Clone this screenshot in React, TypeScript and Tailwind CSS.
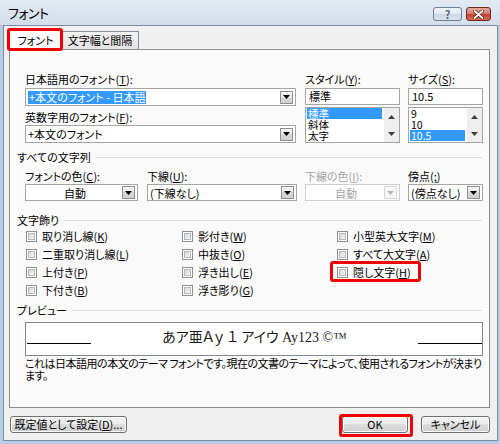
import React from "react";

const ui = "font-['Noto_Sans_CJK_JP','Noto_Sans',sans-serif] [font-feature-settings:'palt']";

function Key({ k }: { k: string }) {
  return <span className="underline decoration-1 underline-offset-[1px]">{k}</span>;
}

function Tri({ up, color = "#000" }: { up?: boolean; color?: string }) {
  return (
    <svg width="7" height="4" viewBox="0 0 7 4">
      <path d={up ? "M0 4h7L3.5 0z" : "M0 0h7L3.5 4z"} fill={color} />
    </svg>
  );
}

function DropBtn({ disabled }: { disabled?: boolean }) {
  return (
    <div
      className={`flex h-[13px] w-[13px] shrink-0 items-center justify-center border ${
        disabled
          ? "border-[#d9d9d9] bg-[#f7f7f7]"
          : "border-[#8e8f8f] bg-[linear-gradient(#f6f6f6,#e6e6e6_50%,#d9d9d9_50%,#cfcfcf)]"
      }`}
    >
      <Tri color={disabled ? "#b5b5b5" : "#000"} />
    </div>
  );
}

function Combo({
  className,
  children,
  disabled,
  center,
}: {
  className: string;
  children: React.ReactNode;
  disabled?: boolean;
  center?: boolean;
}) {
  return (
    <div
      className={`flex items-center border bg-white pr-[2px] ${
        disabled ? "border-[#cdcdcd] text-[#a4a4a4]" : "border-[#a5a5a5]"
      } ${className}`}
    >
      <div className={`flex-1 overflow-hidden whitespace-nowrap pl-[2px] leading-[14px] ${center ? "text-center" : ""}`}>
        {children}
      </div>
      <DropBtn disabled={disabled} />
    </div>
  );
}

function ListBox({ items, sel }: { items: string[]; sel: string }) {
  return (
    <div className="mt-[2px] flex h-[36px] overflow-hidden border border-[#a5a5a5] bg-white">
      <div className="flex-1 pl-[1px] pr-[2px] text-[10.5px]">
        {items.map((i) => (
          <div
            key={i}
            className={`h-[11px] pl-[1px] leading-[11px] ${i === sel ? "bg-[#3399ff] text-white" : ""}`}
          >
            {i}
          </div>
        ))}
      </div>
      <div className="flex w-[15px] flex-col bg-[#eeeeee]">
        <div className="flex flex-1 items-center justify-center">
          <Tri up color="#404040" />
        </div>
        <div className="flex flex-1 items-center justify-center">
          <Tri color="#404040" />
        </div>
      </div>
    </div>
  );
}

function Label({ children, disabled }: { children: React.ReactNode; disabled?: boolean }) {
  return (
    <div className={`h-[13px] whitespace-nowrap leading-[13px] ${disabled ? "text-[#a4a4a4]" : ""}`}>
      {children}
    </div>
  );
}

function Sep({ children, className }: { children: React.ReactNode; className: string }) {
  return (
    <div className={`flex h-[12px] items-center gap-[5px] ${className}`}>
      <span className="leading-[12px]">{children}</span>
      <div className="mr-[1px] h-px flex-1 bg-[#d5dfe5]" />
    </div>
  );
}

function Check({ children, mark }: { children?: React.ReactNode; mark?: boolean }) {
  if (!children) return <div className="h-[18px]" />;
  return (
    <div className="relative flex h-[18px] items-center gap-[5px] whitespace-nowrap">
      <div className="h-[11px] w-[11px] border border-[#8f8f8f] bg-white p-px">
        <div className="h-full w-full border border-[#b5b8bd] bg-[linear-gradient(135deg,#d6d8dc,#f7f7f7)]" />
      </div>
      <span className="leading-[13px]">{children}</span>
      {mark && (
        <div className="absolute left-[-7px] top-[-2px] h-[21px] w-[91px] rounded-[3px] border-[3px] border-[#f00000]" />
      )}
    </div>
  );
}

function Btn({ children, className }: { children: React.ReactNode; className: string }) {
  return (
    <div
      className={`relative flex h-[17px] items-center justify-center rounded-[3px] border border-[#707070] bg-[linear-gradient(#f2f2f2,#ebebeb_50%,#dddddd_50%,#cfcfcf)] leading-none shadow-[inset_0_0_0_1px_#fbfbfb] ${className}`}
    >
      {children}
    </div>
  );
}

export default function App() {
  return (
    <div className={`flex h-[444px] w-[500px] flex-col overflow-hidden bg-[#b6cde4] text-[11px] text-black ${ui}`}>
      {/* title bar */}
      <div className="flex h-[25px] shrink-0 items-start bg-linear-to-b from-[#e3eaf2] to-[#d3deea]">
        <div className="ml-[8px] mt-[4px] text-[13px] leading-[17px] tracking-[-0.5px]">フォント</div>
        <div className="ml-auto mr-[9px] mt-[7px] flex gap-[4px]">
          <div className="flex h-[14px] w-[29px] items-center justify-center rounded-[3px] border border-[#707f93] bg-[linear-gradient(#f3f6f9,#e1e8f0_50%,#cbd6e3_50%,#d9e2ec)] text-[11px] font-bold leading-none text-[#56657a]">
            ?
          </div>
          <div className="flex h-[14px] w-[25px] items-center justify-center rounded-[3px] border border-[#6d2a24] bg-[linear-gradient(#e8a89d,#d7776a_50%,#c1402f_50%,#d36a52)]">
            <svg width="11" height="9" viewBox="0 0 11 9">
              <path d="M1.5 1L9.5 8M9.5 1L1.5 8" stroke="#4a1a14" strokeWidth="3.2" strokeLinecap="round" />
              <path d="M1.5 1L9.5 8M9.5 1L1.5 8" stroke="#fff" strokeWidth="1.8" strokeLinecap="round" />
            </svg>
          </div>
        </div>
      </div>

      {/* client area */}
      <div className="mb-[3px] ml-[3px] mr-[2px] flex flex-1 flex-col border border-[#7c8da3] bg-[#f0f0f0]">
        {/* tabs */}
        <div className="ml-[5px] mt-[3px] flex items-end">
          <div className="relative z-10 -mb-px flex h-[21px] w-[53px] items-start justify-center border border-b-0 border-[#898c95] bg-[#fafafa] pt-[4px] leading-[13px]">
            フォント
            <div className="absolute left-[-3px] top-[-2px] h-[23px] w-[56px] rounded-[3px] border-[3px] border-[#f00000]" />
          </div>
          <div className="flex h-[18px] w-[77px] items-start justify-center border border-b-0 border-l-0 border-[#898c95] bg-[linear-gradient(#f2f2f2,#e3e3e3)] pt-[2px] leading-[13px]">
            文字幅と間隔
          </div>
        </div>

        {/* tab page */}
        <div className="ml-[5px] mr-[7px] flex h-[359px] flex-col border border-[#898c95] bg-[#fafafa] pl-[7px] pr-[6px] pt-[23px]">
          {/* fonts */}
          <div className="ml-[8px] flex">
            <div className="w-[271px]">
              <Label>
                日本語用のフォント(<Key k="T" />):
              </Label>
              <Combo className="mt-[2px] h-[18px]">
                <span className="inline-block bg-[#3399ff] px-px leading-[13px] text-white">+本文のフォント - 日本語</span>
              </Combo>
              <div className="mt-[5px]">
                <Label>
                  英数字用のフォント(<Key k="F" />):
                </Label>
              </div>
              <Combo className="mt-px h-[18px]">+本文のフォント</Combo>
            </div>
            <div className="ml-[9px] w-[95px]">
              <Label>
                スタイル(<Key k="Y" />):
              </Label>
              <div className="mt-[2px] h-[17px] border border-[#a5a5a5] bg-white pl-[3px] leading-[15px]">標準</div>
              <ListBox items={["標準", "斜体", "太字"]} sel="標準" />
            </div>
            <div className="ml-[8px] w-[75px]">
              <Label>
                サイズ(<Key k="S" />):
              </Label>
              <div className="mt-[2px] h-[17px] border border-[#a5a5a5] bg-white pl-[3px] leading-[15px]">10.5</div>
              <ListBox items={["9", "10", "10.5"]} sel="10.5" />
            </div>
          </div>

          <Sep className="mt-[8px]">すべての文字列</Sep>

          {/* colours and underline */}
          <div className="ml-[8px] mt-[7px] flex">
            <div className="w-[113px]">
              <Label>
                フォントの色(<Key k="C" />):
              </Label>
              <Combo className="mt-px h-[17px]" center>
                自動
              </Combo>
            </div>
            <div className="ml-[9px] w-[150px]">
              <Label>
                下線(<Key k="U" />):
              </Label>
              <Combo className="mt-px h-[17px]">(下線なし)</Combo>
            </div>
            <div className="ml-[8px] w-[95px]">
              <Label disabled>
                下線の色(<Key k="I" />):
              </Label>
              <Combo className="mt-px h-[17px]" center disabled>
                自動
              </Combo>
            </div>
            <div className="ml-[8px] w-[75px]">
              <Label>
                傍点(<Key k=";" />)
              </Label>
              <Combo className="mt-px h-[17px]">(傍点なし)</Combo>
            </div>
          </div>

          <Sep className="mt-[13px]">文字飾り</Sep>

          {/* effects */}
          <div className="ml-[9px] mt-px grid grid-cols-[156px_155px_1fr]">
            <div>
              <Check>
                取り消し線(<Key k="K" />)
              </Check>
              <Check>
                二重取り消し線(<Key k="L" />)
              </Check>
              <Check>
                上付き(<Key k="P" />)
              </Check>
              <Check>
                下付き(<Key k="B" />)
              </Check>
            </div>
            <div>
              <Check>
                影付き(<Key k="W" />)
              </Check>
              <Check>
                中抜き(<Key k="O" />)
              </Check>
              <Check>
                浮き出し(<Key k="E" />)
              </Check>
              <Check>
                浮き彫り(<Key k="G" />)
              </Check>
            </div>
            <div>
              <Check>
                小型英大文字(<Key k="M" />)
              </Check>
              <Check>
                すべて大文字(<Key k="A" />)
              </Check>
              <Check mark>
                隠し文字(<Key k="H" />)
              </Check>
              <Check />
            </div>
          </div>

          <Sep className="mt-[5px]">プレビュー</Sep>

          {/* preview */}
          <div className="ml-[8px] mt-[6px] flex h-[34px] border border-[#828790] bg-white pl-px">
            <div className="h-[21px] w-[64px] border-b border-black" />
            <div className="flex-1 whitespace-nowrap pt-[6px] text-center font-['Liberation_Serif','Noto_Sans_CJK_JP',serif] text-[14px] leading-[17px] text-[#1a1a1a]">
              あア亜Ａｙ １ アイウ Ay123 ©™
            </div>
            <div className="h-[21px] w-[64px] border-b border-black" />
          </div>
          <div className="ml-[8px] mt-px whitespace-nowrap leading-[12px] tracking-[-0.5px]">
            これは日本語用の本文のテーマ フォントです。現在の文書のテーマによって、使用されるフォントが決まり
            <br />
            ます。
          </div>
        </div>

        {/* buttons */}
        <div className="ml-[6px] mr-[7px] mt-[8px] flex">
          <Btn className="w-[117px]">
            既定値として設定(<Key k="D" />)...
          </Btn>
          <Btn className="ml-auto w-[66px]">
            OK
            <div className="absolute left-[-4px] top-[-3px] h-[23px] w-[74px] rounded-[3px] border-[3px] border-[#f00000]" />
          </Btn>
          <Btn className="ml-[13px] w-[69px]">キャンセル</Btn>
        </div>
      </div>
    </div>
  );
}
